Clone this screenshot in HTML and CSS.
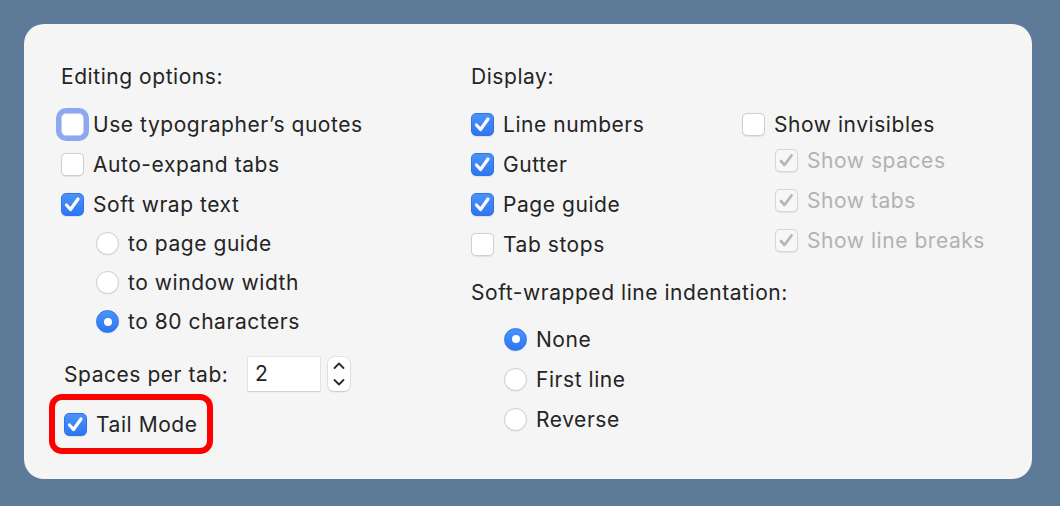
FILE: index.html
```html
<!DOCTYPE html>
<html>
<head>
<meta charset="utf-8">
<link rel="stylesheet" href="styles.css">
</head>
<body>
<div class="panel">
  <div class="col-left">
    <div class="heading">Editing options:</div>
    <div class="row first"><span class="cb focus"></span><span>Use typographer’s quotes</span></div>
    <div class="row"><span class="cb"></span><span>Auto-expand tabs</span></div>
    <div class="row"><span class="cb on"><svg class="chk" viewBox="0 0 23 23"><path d="M5.5 12 L9.5 16.5 L17 6"/></svg></span><span>Soft wrap text</span></div>
    <div class="radios-left">
      <div class="rrow"><span class="rb"></span><span>to page guide</span></div>
      <div class="rrow"><span class="rb"></span><span>to window width</span></div>
      <div class="rrow"><span class="rb on"></span><span>to 80 characters</span></div>
    </div>
    <div class="spaces">
      <span class="spaces-label">Spaces per tab:</span>
      <span class="field">2</span>
      <span class="stepper">
        <svg width="22" height="34" viewBox="0 0 22 34"><path d="M6.5 11 L11 6.5 L15.5 11" fill="none" stroke="#2a2a2a" stroke-width="1.8" stroke-linecap="round" stroke-linejoin="round"/><path d="M6.5 23 L11 27.5 L15.5 23" fill="none" stroke="#2a2a2a" stroke-width="1.8" stroke-linecap="round" stroke-linejoin="round"/></svg>
      </span>
    </div>
    <div class="tail">
      <span class="cb on"><svg class="chk" viewBox="0 0 23 23"><path d="M5.5 12 L9.5 16.5 L17 6"/></svg></span><span>Tail Mode</span>
    </div>
  </div>
  <div class="col-right">
    <div class="heading">Display:</div>
    <div class="display">
      <div class="display-main">
        <div class="row first"><span class="cb on"><svg class="chk" viewBox="0 0 23 23"><path d="M5.5 12 L9.5 16.5 L17 6"/></svg></span><span>Line numbers</span></div>
        <div class="row"><span class="cb on"><svg class="chk" viewBox="0 0 23 23"><path d="M5.5 12 L9.5 16.5 L17 6"/></svg></span><span>Gutter</span></div>
        <div class="row"><span class="cb on"><svg class="chk" viewBox="0 0 23 23"><path d="M5.5 12 L9.5 16.5 L17 6"/></svg></span><span>Page guide</span></div>
        <div class="row"><span class="cb"></span><span>Tab stops</span></div>
      </div>
      <div class="display-inv">
        <div class="row first"><span class="cb"></span><span>Show invisibles</span></div>
        <div class="sub">
          <div class="row dis"><span class="cb dis-on"><svg class="chk" viewBox="0 0 23 23"><path d="M6 12 L9.5 16 L16.5 6.5"/></svg></span><span>Show spaces</span></div>
          <div class="row dis"><span class="cb dis-on"><svg class="chk" viewBox="0 0 23 23"><path d="M6 12 L9.5 16 L16.5 6.5"/></svg></span><span>Show tabs</span></div>
          <div class="row dis"><span class="cb dis-on"><svg class="chk" viewBox="0 0 23 23"><path d="M6 12 L9.5 16 L16.5 6.5"/></svg></span><span>Show line breaks</span></div>
        </div>
      </div>
    </div>
    <div class="heading heading2">Soft-wrapped line indentation:</div>
    <div class="radios-right">
      <div class="row"><span class="rb on"></span><span>None</span></div>
      <div class="row"><span class="rb"></span><span>First line</span></div>
      <div class="row"><span class="rb"></span><span>Reverse</span></div>
    </div>
  </div>
</div>
</body>
</html>
```

FILE: styles.css
```css
html, body {
  margin: 0;
  padding: 0;
  background: #5d7b99;
}
body {
  padding: 24px 0 0 24px;
  font-family: "Inter", "Liberation Sans", sans-serif;
  font-size: 21px;
  letter-spacing: 0.55px;
  color: #242424;
}
.panel {
  box-sizing: border-box;
  width: 1008px;
  height: 455px;
  background: #f5f5f5;
  border-radius: 20px;
  padding: 33px 0 0 37px;
  display: flex;
}
.col-left {
  width: 410px;
  display: flex;
  flex-direction: column;
}
.col-right {
  display: flex;
  flex-direction: column;
}
.heading {
  height: 40px;
  line-height: 40px;
}
.row, .rrow {
  height: 40px;
  display: flex;
  align-items: center;
}
.row.first { margin-top: 7px; }
.rrow { height: 39px; }
.cb {
  box-sizing: border-box;
  width: 23px;
  height: 23px;
  border-radius: 5px;
  background: #ffffff;
  border: 1px solid #cfcfcf;
  box-shadow: 0 0.5px 1px rgba(0,0,0,0.08);
  margin-right: 9px;
  flex: none;
  position: relative;
}
.cb.focus {
  box-shadow: 0 0 0 5px #8ca8f0;
  border-color: #c3cdee;
}
.cb.on {
  background: linear-gradient(#4b93f9, #2d76f1);
  border-color: #2d74ec;
}
.chk {
  position: absolute;
  left: -1px;
  top: -1px;
  width: 23px;
  height: 23px;
  fill: none;
  stroke: #ffffff;
  stroke-width: 3.2;
  stroke-linecap: round;
  stroke-linejoin: round;
}
.cb.dis-on {
  background: #f7f7f7;
  border-color: #d8d8d8;
}
.cb.dis-on .chk {
  stroke: #b8b8b8;
  stroke-width: 2.8;
}
.row.dis { color: #b2b2b2; }
.rb {
  box-sizing: border-box;
  width: 23px;
  height: 23px;
  border-radius: 50%;
  background: #ffffff;
  border: 1px solid #cfcfcf;
  box-shadow: 0 0.5px 1px rgba(0,0,0,0.08);
  margin-right: 9px;
  flex: none;
  position: relative;
}
.rb.on {
  background: linear-gradient(#4b93f9, #2d76f1);
  border-color: #2d74ec;
}
.rb.on::after {
  content: "";
  position: absolute;
  left: 6.5px;
  top: 6.5px;
  width: 8px;
  height: 8px;
  border-radius: 50%;
  background: #ffffff;
}
.radios-left {
  padding-left: 35px;
}
.spaces {
  margin-top: 13px;
  height: 40px;
  display: flex;
  align-items: center;
  padding-left: 3px;
}
.spaces-label { width: 184px; }
.field {
  box-sizing: border-box;
  width: 72px;
  height: 34px;
  background: #ffffff;
  box-shadow: 0 0 0 0.5px #d6d6d6, 0 1px 1px rgba(0,0,0,0.15);
  padding-left: 7px;
  line-height: 34px;
  margin-right: 8px;
}
.stepper {
  width: 22px;
  height: 34px;
  background: #ffffff;
  border-radius: 6px;
  box-shadow: 0 0 0 0.5px #d0d0d0, 0 1px 1.5px rgba(0,0,0,0.2);
  display: flex;
}
.tail {
  box-sizing: border-box;
  margin-left: -12px;
  width: 164px;
  height: 60px;
  border: 6px solid #ff0000;
  border-radius: 13px;
  display: flex;
  align-items: center;
  padding-left: 9px;
}
.display {
  display: flex;
}
.display-main {
  width: 271px;
}
.display-inv .sub {
  margin-top: -4px;
  padding-left: 33px;
}
.heading2 {
  margin-top: 9px;
}
.radios-right {
  padding-left: 33px;
  margin-top: 6px;
}
```
